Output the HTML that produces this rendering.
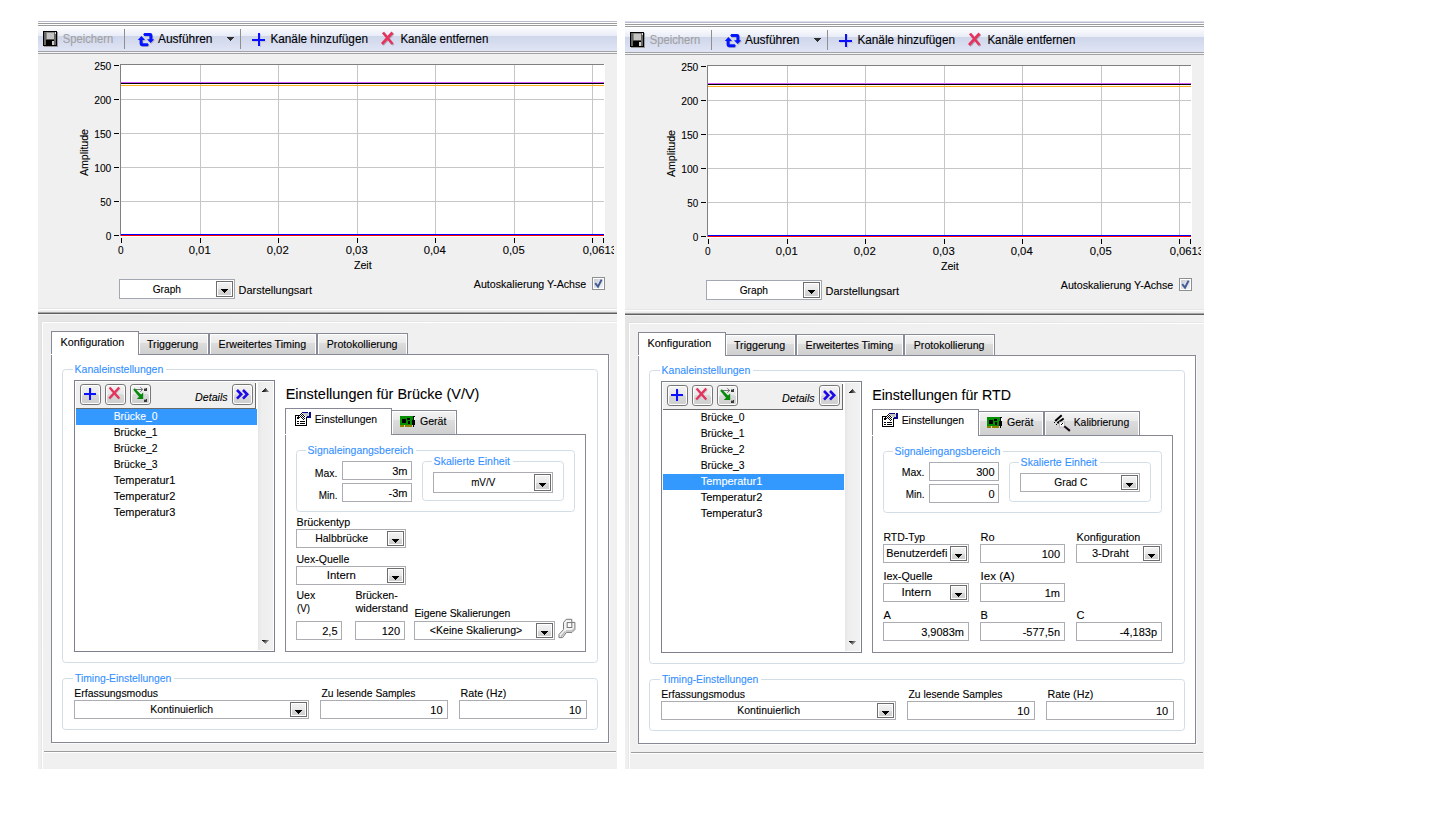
<!DOCTYPE html>
<html lang="de"><head><meta charset="utf-8"><title>DAQ-Assistent: Brücke und RTD</title>
<style>html,body{margin:0;padding:0;background:#fff;}body{width:1455px;height:833px;overflow:hidden;}svg{display:block;font-family:'Liberation Sans', 'DejaVu Sans', sans-serif;}text{white-space:pre;stroke-width:0.1px;}</style></head><body>
<svg width="1455" height="833" viewBox="0 0 1455 833" shape-rendering="crispEdges">
<defs><linearGradient id="gTb1" x1="0" y1="0" x2="0" y2="1"><stop offset="0" stop-color="#ffffff"/><stop offset="1" stop-color="#e8ecf7"/></linearGradient><linearGradient id="gTb2" x1="0" y1="0" x2="0" y2="1"><stop offset="0" stop-color="#cfd6ea"/><stop offset="1" stop-color="#e0e5f5"/></linearGradient><linearGradient id="gBtnTop" x1="0" y1="0" x2="0" y2="1"><stop offset="0" stop-color="#f2f2f2"/><stop offset="1" stop-color="#e8e8e8"/></linearGradient><linearGradient id="gBtnBot" x1="0" y1="0" x2="0" y2="1"><stop offset="0" stop-color="#dadada"/><stop offset="1" stop-color="#cfcfcf"/></linearGradient><linearGradient id="gTabTop" x1="0" y1="0" x2="0" y2="1"><stop offset="0" stop-color="#f3f3f3"/><stop offset="1" stop-color="#eaeaea"/></linearGradient><linearGradient id="gTabBot" x1="0" y1="0" x2="0" y2="1"><stop offset="0" stop-color="#dddddd"/><stop offset="1" stop-color="#cfcfcf"/></linearGradient><linearGradient id="gScroll" x1="0" y1="0" x2="1" y2="0"><stop offset="0" stop-color="#e6e6e6"/><stop offset="0.25" stop-color="#eeeeee"/><stop offset="1" stop-color="#f1f1f1"/></linearGradient><linearGradient id="gStrip" x1="0" y1="0" x2="0" y2="1"><stop offset="0" stop-color="#e5e5e5"/><stop offset="1" stop-color="#f0f0f0"/></linearGradient><linearGradient id="gStrip2" x1="0" y1="0" x2="0" y2="1"><stop offset="0" stop-color="#e1e1e1"/><stop offset="1" stop-color="#e8e8e8"/></linearGradient><linearGradient id="gBand" x1="0" y1="0" x2="1" y2="0"><stop offset="0" stop-color="#e5e5e5"/><stop offset="0.5" stop-color="#ededed"/><stop offset="1" stop-color="#f0f0f0"/></linearGradient><linearGradient id="gBand2" x1="0" y1="0" x2="1" y2="0"><stop offset="0" stop-color="#e0e0e0"/><stop offset="1" stop-color="#e8e8e8"/></linearGradient><linearGradient id="gChk" x1="0" y1="0" x2="1" y2="1"><stop offset="0" stop-color="#c9cdd6"/><stop offset="1" stop-color="#f4f4f6"/></linearGradient><linearGradient id="gArr" gradientUnits="userSpaceOnUse" x1="262" y1="0" x2="269" y2="0"><stop offset="0" stop-color="#0c0c0c"/><stop offset="0.45" stop-color="#3a3a3a"/><stop offset="1" stop-color="#b4b4b4"/></linearGradient><pattern id="pChk" width="2" height="2" patternUnits="userSpaceOnUse"><rect width="2" height="2" fill="#fff"/><rect width="1" height="1" fill="#000"/><rect x="1" y="1" width="1" height="1" fill="#000"/></pattern></defs>
<g id="panel-bruecke">
<rect x="38" y="21" width="579" height="748" fill="#f0f0f0"/>
<rect x="38" y="21" width="579" height="1" fill="#b7bbcd"/>
<rect x="38" y="22" width="579" height="1" fill="#fff"/>
<rect x="38" y="23" width="579" height="1" fill="#9b9b9b"/>
<rect x="38" y="24" width="579" height="1" fill="#fff"/>
<rect x="38" y="25" width="579" height="1" fill="#9b9b9b"/>
<rect x="38" y="26" width="579" height="10" fill="url(#gTb1)"/>
<rect x="38" y="36" width="579" height="15" fill="url(#gTb2)"/>
<rect x="38" y="51" width="579" height="1" fill="#a2a2a2"/>
<rect x="38" y="52" width="579" height="1" fill="#f3f4fa"/>
<rect x="38" y="53" width="579" height="1" fill="#a2a2a2"/>
<g id="toolbar" font-size="12">
<rect x="44" y="32" width="14" height="15" fill="#9a9a9a"/>
<rect x="43" y="31" width="14" height="15" fill="#000"/>
<rect x="44" y="32" width="2" height="13" fill="#666"/>
<rect x="54" y="32" width="2" height="13" fill="#666"/>
<rect x="46" y="32" width="8" height="7" fill="#c4c4c4"/>
<rect x="46" y="32" width="8" height="1" fill="#888"/>
<rect x="46" y="32" width="1" height="7" fill="#888"/>
<rect x="46" y="39" width="8" height="1" fill="#555"/>
<rect x="46" y="40" width="8" height="6" fill="#000"/>
<rect x="52" y="41" width="2" height="4" fill="#d0d0d0"/>
<rect x="55" y="32" width="1" height="2" fill="#ddd"/>
<text x="62.8" y="43" font-size="12" text-anchor="start" fill="#a1a1a1" stroke="#a1a1a1" textLength="50.5" lengthAdjust="spacingAndGlyphs">Speichern</text>
<rect x="124" y="29" width="1" height="20" fill="#8f8f8f"/>
<g shape-rendering="auto"><g transform="translate(0.8,0.8)" opacity="0.28"><path d="M143.2 34.5 L144.4 33 L150 33 Q152.4 33 152.4 35.4 L152.4 39.3 L154.2 39.3 L150.6 43.1 L147 39.3 L149.4 39.3 L149.4 36 L144.4 36 Z" fill="#5a4a20"/><path d="M143.2 34.5 L144.4 33 L150 33 Q152.4 33 152.4 35.4 L152.4 39.3 L154.2 39.3 L150.6 43.1 L147 39.3 L149.4 39.3 L149.4 36 L144.4 36 Z" fill="#5a4a20" transform="rotate(180 146 39.6)"/></g><path d="M143.2 34.5 L144.4 33 L150 33 Q152.4 33 152.4 35.4 L152.4 39.3 L154.2 39.3 L150.6 43.1 L147 39.3 L149.4 39.3 L149.4 36 L144.4 36 Z" fill="#0414ff"/><path d="M143.2 34.5 L144.4 33 L150 33 Q152.4 33 152.4 35.4 L152.4 39.3 L154.2 39.3 L150.6 43.1 L147 39.3 L149.4 39.3 L149.4 36 L144.4 36 Z" fill="#0414ff" transform="rotate(180 146 39.6)"/></g>
<text x="158" y="43" font-size="12" text-anchor="start" fill="#000" stroke="#000" textLength="54.5" lengthAdjust="spacingAndGlyphs">Ausführen</text>
<rect x="227" y="37" width="7" height="1" fill="#303030"/>
<rect x="228" y="38" width="5" height="1" fill="#303030"/>
<rect x="229" y="39" width="3" height="1" fill="#303030"/>
<rect x="230" y="40" width="1" height="1" fill="#303030"/>
<rect x="240" y="29" width="1" height="20" fill="#8f8f8f"/>
<rect x="253" y="41" width="13" height="1" fill="#bfc3d6"/>
<rect x="260" y="34" width="1" height="13" fill="#bfc3d6"/>
<rect x="252" y="39" width="13" height="2" fill="#0a10ff"/>
<rect x="258" y="33" width="2" height="13" fill="#0a10ff"/>
<text x="270.4" y="43" font-size="12" text-anchor="start" fill="#000" stroke="#000" textLength="97.6" lengthAdjust="spacingAndGlyphs">Kanäle hinzufügen</text>
<g shape-rendering="auto" stroke-linecap="butt" fill="none"><path d="M384 33.5 L393.5 45 M393.5 33.5 L383 45" stroke="#a9a9b8" stroke-width="2.2"/><path d="M383 32.5 L392.5 44 M392.5 32.5 L382 44" stroke="#e4335c" stroke-width="2.7"/></g>
<text x="400.4" y="43" font-size="12" text-anchor="start" fill="#000" stroke="#000" textLength="88.0" lengthAdjust="spacingAndGlyphs">Kanäle entfernen</text>
</g>
<g id="graph">
<rect x="120" y="64" width="485" height="173" fill="#fff"/>
<rect x="200" y="65" width="1" height="171" fill="#c6c6c6"/>
<rect x="278" y="65" width="1" height="171" fill="#c6c6c6"/>
<rect x="357" y="65" width="1" height="171" fill="#c6c6c6"/>
<rect x="435" y="65" width="1" height="171" fill="#c6c6c6"/>
<rect x="514" y="65" width="1" height="171" fill="#c6c6c6"/>
<rect x="592" y="65" width="1" height="171" fill="#c6c6c6"/>
<rect x="121" y="99" width="483" height="1" fill="#c6c6c6"/>
<rect x="121" y="133" width="483" height="1" fill="#c6c6c6"/>
<rect x="121" y="167" width="483" height="1" fill="#c6c6c6"/>
<rect x="121" y="201" width="483" height="1" fill="#c6c6c6"/>
<rect x="120" y="64" width="1" height="172" fill="#808080"/>
<rect x="120" y="64" width="484" height="1" fill="#808080"/>
<rect x="121" y="82" width="483" height="1" fill="#d65cff"/>
<rect x="121" y="83" width="483" height="1" fill="#000"/>
<rect x="121" y="85" width="483" height="1" fill="#ffb01e"/>
<rect x="121" y="234" width="483" height="1" fill="#0000ff"/>
<rect x="121" y="235" width="483" height="1" fill="#ff0000"/>
<rect x="114" y="65" width="5" height="1" fill="#000"/>
<text x="111.3" y="70" font-size="11" text-anchor="end" fill="#000" stroke="#000" textLength="17.1" lengthAdjust="spacingAndGlyphs">250</text>
<rect x="114" y="99" width="5" height="1" fill="#000"/>
<text x="111.3" y="104" font-size="11" text-anchor="end" fill="#000" stroke="#000" textLength="17.1" lengthAdjust="spacingAndGlyphs">200</text>
<rect x="114" y="133" width="5" height="1" fill="#000"/>
<text x="111.3" y="138" font-size="11" text-anchor="end" fill="#000" stroke="#000" textLength="17.1" lengthAdjust="spacingAndGlyphs">150</text>
<rect x="114" y="167" width="5" height="1" fill="#000"/>
<text x="111.3" y="172" font-size="11" text-anchor="end" fill="#000" stroke="#000" textLength="17.1" lengthAdjust="spacingAndGlyphs">100</text>
<rect x="114" y="201" width="5" height="1" fill="#000"/>
<text x="111.3" y="206" font-size="11" text-anchor="end" fill="#000" stroke="#000" textLength="11.0" lengthAdjust="spacingAndGlyphs">50</text>
<rect x="114" y="235" width="5" height="1" fill="#000"/>
<text x="111.3" y="240" font-size="11" text-anchor="end" fill="#000" stroke="#000" textLength="5.6" lengthAdjust="spacingAndGlyphs">0</text>
<rect x="121" y="238" width="1" height="5" fill="#000"/>
<text x="120.7" y="254.2" font-size="11" text-anchor="middle" fill="#000" stroke="#000" textLength="5.6" lengthAdjust="spacingAndGlyphs">0</text>
<rect x="200" y="238" width="1" height="5" fill="#000"/>
<text x="199.7" y="254.2" font-size="11" text-anchor="middle" fill="#000" stroke="#000" textLength="22.0" lengthAdjust="spacingAndGlyphs">0,01</text>
<rect x="278" y="238" width="1" height="5" fill="#000"/>
<text x="277.7" y="254.2" font-size="11" text-anchor="middle" fill="#000" stroke="#000" textLength="22.0" lengthAdjust="spacingAndGlyphs">0,02</text>
<rect x="357" y="238" width="1" height="5" fill="#000"/>
<text x="356.7" y="254.2" font-size="11" text-anchor="middle" fill="#000" stroke="#000" textLength="22.0" lengthAdjust="spacingAndGlyphs">0,03</text>
<rect x="435" y="238" width="1" height="5" fill="#000"/>
<text x="434.7" y="254.2" font-size="11" text-anchor="middle" fill="#000" stroke="#000" textLength="22.0" lengthAdjust="spacingAndGlyphs">0,04</text>
<rect x="514" y="238" width="1" height="5" fill="#000"/>
<text x="513.7" y="254.2" font-size="11" text-anchor="middle" fill="#000" stroke="#000" textLength="22.0" lengthAdjust="spacingAndGlyphs">0,05</text>
<rect x="592" y="238" width="1" height="5" fill="#000"/>
<rect x="603" y="238" width="1" height="5" fill="#000"/>
<clipPath id="clipx0"><rect x="570" y="244" width="44" height="14"/></clipPath>
<g clip-path="url(#clipx0)">
<text x="582.7" y="254.2" font-size="11" text-anchor="start" fill="#000" stroke="#000" textLength="34.3" lengthAdjust="spacingAndGlyphs">0,0613</text>
</g>
<text x="353.9" y="269" font-size="11" text-anchor="start" fill="#000" stroke="#000" textLength="17.8" lengthAdjust="spacingAndGlyphs">Zeit</text>
<text transform="translate(87.6,176) rotate(-90)" font-size="11" stroke="#000" textLength="47" lengthAdjust="spacingAndGlyphs">Amplitude</text>
<rect x="119.5" y="279.5" width="115" height="19" fill="#fff" stroke="#a3a7b1" stroke-width="1"/>
<rect x="216" y="281" width="17" height="16" fill="#6d6d6d"/>
<rect x="217" y="282" width="15" height="14" fill="#ffffff"/>
<rect x="218" y="283" width="13" height="6" fill="url(#gBtnTop)"/>
<rect x="218" y="289" width="13" height="6" fill="url(#gBtnBot)"/>
<rect x="221" y="289" width="7" height="1" fill="#000"/>
<rect x="222" y="290" width="5" height="1" fill="#000"/>
<rect x="223" y="291" width="3" height="1" fill="#000"/>
<rect x="224" y="292" width="1" height="1" fill="#000"/>
<text x="152.7" y="293" font-size="11" text-anchor="start" fill="#000" stroke="#000" textLength="28.3" lengthAdjust="spacingAndGlyphs">Graph</text>
<text x="238.6" y="294" font-size="11" text-anchor="start" fill="#000" stroke="#000" textLength="73.4" lengthAdjust="spacingAndGlyphs">Darstellungsart</text>
<text x="473.8" y="288" font-size="11" text-anchor="start" fill="#000" stroke="#000" textLength="112.5" lengthAdjust="spacingAndGlyphs">Autoskalierung Y-Achse</text>
<rect x="592.5" y="277.5" width="12" height="12" fill="#fff" stroke="#8e8f8f" stroke-width="1"/>
<rect x="594" y="279" width="9" height="9" fill="url(#gChk)"/>
<path d="M595.2 283.2 L598 286.6 L601.6 279.6" stroke="#435b96" stroke-width="2" fill="none" shape-rendering="auto"/>
</g>
<rect x="38" y="308" width="579" height="1" fill="#e6e6e6"/>
<rect x="38" y="309" width="579" height="1" fill="#fdfdfd"/>
<rect x="38" y="311" width="579" height="1" fill="#e9e9e9"/>
<rect x="38" y="312" width="579" height="1" fill="#a6a6a6"/>
<rect x="38" y="313" width="579" height="1" fill="#5e5e5e"/>
<rect x="38" y="314" width="579" height="1" fill="#f2f2f2"/>
<rect x="38" y="315" width="579" height="6" fill="url(#gBand)"/>
<rect x="38" y="321" width="579" height="1" fill="url(#gBand2)"/>
<rect x="38" y="321" width="3" height="448" fill="url(#gStrip)"/>
<rect x="41" y="321" width="1" height="448" fill="url(#gStrip2)"/>
<rect x="42" y="322" width="575" height="1" fill="#fff"/>
<rect x="42" y="322" width="1" height="447" fill="#fff"/>
<rect x="44" y="751" width="572" height="1" fill="#9c9c9c"/>
<rect x="44" y="752" width="572" height="1" fill="#fff"/>
<g id="tabs">
<rect x="51.5" y="354.5" width="557" height="388" fill="#fff" stroke="#868994" stroke-width="1"/>
<rect x="52" y="743" width="558" height="1" fill="#fafafa"/>
<rect x="609" y="355" width="1" height="389" fill="#fafafa"/>
<rect x="138" y="333" width="71" height="22" fill="#868b97"/>
<rect x="139" y="334" width="69" height="20" fill="#fff"/>
<rect x="140" y="335" width="67" height="8" fill="url(#gTabTop)"/>
<rect x="140" y="343" width="67" height="11" fill="url(#gTabBot)"/>
<rect x="209" y="333" width="108" height="22" fill="#868b97"/>
<rect x="210" y="334" width="106" height="20" fill="#fff"/>
<rect x="211" y="335" width="104" height="8" fill="url(#gTabTop)"/>
<rect x="211" y="343" width="104" height="11" fill="url(#gTabBot)"/>
<rect x="317" y="333" width="91" height="22" fill="#868b97"/>
<rect x="318" y="334" width="89" height="20" fill="#fff"/>
<rect x="319" y="335" width="87" height="8" fill="url(#gTabTop)"/>
<rect x="319" y="343" width="87" height="11" fill="url(#gTabBot)"/>
<rect x="51" y="331" width="88" height="24" fill="#868994"/>
<rect x="52" y="332" width="86" height="24" fill="#fff"/>
<rect x="51" y="354" width="1" height="1" fill="#fff"/>
<text x="60.6" y="346" font-size="11" text-anchor="start" fill="#000" stroke="#000" textLength="63.7" lengthAdjust="spacingAndGlyphs">Konfiguration</text>
<text x="147" y="348" font-size="11" text-anchor="start" fill="#000" stroke="#000" textLength="51.2" lengthAdjust="spacingAndGlyphs">Triggerung</text>
<text x="218.6" y="348" font-size="11" text-anchor="start" fill="#000" stroke="#000" textLength="87.6" lengthAdjust="spacingAndGlyphs">Erweitertes Timing</text>
<text x="326.8" y="348" font-size="11" text-anchor="start" fill="#000" stroke="#000" textLength="70.7" lengthAdjust="spacingAndGlyphs">Protokollierung</text>
</g>
<g id="channels">
<rect x="62.5" y="369.5" width="535" height="293" fill="none" stroke="#d3dde6" stroke-width="1" rx="3" shape-rendering="auto"/>
<rect x="72.6" y="368" width="93.70000000000002" height="3" fill="#fff"/>
<text x="74.6" y="373" font-size="11" text-anchor="start" fill="#3390ff" stroke="#3390ff" textLength="88.7" lengthAdjust="spacingAndGlyphs">Kanaleinstellungen</text>
<rect x="74.5" y="380.5" width="200" height="271" fill="#fff" stroke="#7b808c" stroke-width="1"/>
<rect x="76" y="382" width="179" height="26" fill="#f0f0f0"/>
<rect x="255" y="383" width="1" height="26" fill="#6b6b6b"/>
<rect x="76" y="408" width="180" height="1" fill="#6b6b6b"/>
<rect x="258" y="382" width="15" height="268" fill="url(#gScroll)"/>
<rect x="265" y="388" width="1" height="1" fill="url(#gArr)"/>
<rect x="264" y="389" width="3" height="1" fill="url(#gArr)"/>
<rect x="263" y="390" width="5" height="1" fill="url(#gArr)"/>
<rect x="262" y="391" width="7" height="1" fill="url(#gArr)"/>
<rect x="262" y="640" width="7" height="1" fill="url(#gArr)" opacity="1.0"/>
<rect x="263" y="641" width="5" height="1" fill="url(#gArr)" opacity="0.8200000000000001"/>
<rect x="264" y="642" width="3" height="1" fill="url(#gArr)" opacity="0.64"/>
<rect x="265" y="643" width="1" height="1" fill="url(#gArr)" opacity="0.45999999999999996"/>
<rect x="80.5" y="384.5" width="20" height="20" rx="2.6" fill="#fff" stroke="#767676" shape-rendering="auto"/>
<rect x="82" y="386" width="17" height="8" rx="1.5" fill="url(#gBtnTop)" shape-rendering="auto"/>
<rect x="82" y="394" width="17" height="9" rx="1.5" fill="url(#gBtnBot)" shape-rendering="auto"/>
<rect x="105.5" y="384.5" width="20" height="20" rx="2.6" fill="#fff" stroke="#767676" shape-rendering="auto"/>
<rect x="107" y="386" width="17" height="8" rx="1.5" fill="url(#gBtnTop)" shape-rendering="auto"/>
<rect x="107" y="394" width="17" height="9" rx="1.5" fill="url(#gBtnBot)" shape-rendering="auto"/>
<rect x="130.5" y="384.5" width="20" height="20" rx="2.6" fill="#fff" stroke="#767676" shape-rendering="auto"/>
<rect x="132" y="386" width="17" height="8" rx="1.5" fill="url(#gBtnTop)" shape-rendering="auto"/>
<rect x="132" y="394" width="17" height="9" rx="1.5" fill="url(#gBtnBot)" shape-rendering="auto"/>
<rect x="232.5" y="384.5" width="20" height="20" rx="2.6" fill="#fff" stroke="#767676" shape-rendering="auto"/>
<rect x="234" y="386" width="17" height="8" rx="1.5" fill="url(#gBtnTop)" shape-rendering="auto"/>
<rect x="234" y="394" width="17" height="9" rx="1.5" fill="url(#gBtnBot)" shape-rendering="auto"/>
<rect x="85" y="395" width="12" height="1" fill="#d2d2d6"/>
<rect x="91" y="389" width="1" height="12" fill="#d2d2d6"/>
<rect x="84" y="393" width="12" height="2" fill="#0a10ff"/>
<rect x="89" y="388" width="2" height="12" fill="#0a10ff"/>
<g shape-rendering="auto" fill="none"><path d="M110.4 388.3 L120 399.3 M120 388.3 L110 399.3" stroke="#c4c4c4" stroke-width="2"/><path d="M109.6 387.5 L119.2 398.6 M119.2 387.5 L109.2 398.6" stroke="#e4335c" stroke-width="2.3"/></g>
<g shape-rendering="auto"><path d="M135.5 389.5 L142.6 389.5 M140.3 387.3 L142.7 389.5 L140.3 391.7" stroke="#666" stroke-width="0.9" fill="none"/><path d="M133.2 389.8 L134.8 388.2 L141 394.6 L143.2 392.6 L143.2 399 L136.8 399 L139 396.8 Z" fill="#078a0c"/></g>
<rect x="144" y="388" width="3" height="3" fill="#3a3a3a"/>
<rect x="144" y="399" width="3" height="3" fill="#3a3a3a"/>
<rect x="144" y="388" width="2" height="1" fill="#9a9a9a"/>
<rect x="144" y="399" width="2" height="1" fill="#9a9a9a"/>
<path d="M237 390 L241.2 394.3 L237 398.6 M243 390 L247.2 394.3 L243 398.6" stroke="#1c08e8" stroke-width="2.6" fill="none" shape-rendering="auto"/>
<text x="195" y="401" font-size="11" font-style="italic" stroke="#000" textLength="32.7" lengthAdjust="spacingAndGlyphs">Details</text>
<rect x="76" y="409" width="181" height="16" fill="#3399ff"/>
<text x="113.7" y="420" font-size="11" text-anchor="start" fill="#fff" stroke="#fff" textLength="43.8" lengthAdjust="spacingAndGlyphs">Brücke_0</text>
<text x="113.7" y="436" font-size="11" text-anchor="start" fill="#000" stroke="#000" textLength="43.8" lengthAdjust="spacingAndGlyphs">Brücke_1</text>
<text x="113.7" y="452" font-size="11" text-anchor="start" fill="#000" stroke="#000" textLength="43.8" lengthAdjust="spacingAndGlyphs">Brücke_2</text>
<text x="113.7" y="468" font-size="11" text-anchor="start" fill="#000" stroke="#000" textLength="43.8" lengthAdjust="spacingAndGlyphs">Brücke_3</text>
<text x="113.7" y="484" font-size="11" text-anchor="start" fill="#000" stroke="#000" textLength="61.6" lengthAdjust="spacingAndGlyphs">Temperatur1</text>
<text x="113.7" y="500" font-size="11" text-anchor="start" fill="#000" stroke="#000" textLength="61.6" lengthAdjust="spacingAndGlyphs">Temperatur2</text>
<text x="113.7" y="516" font-size="11" text-anchor="start" fill="#000" stroke="#000" textLength="61.6" lengthAdjust="spacingAndGlyphs">Temperatur3</text>
</g>
<g id="detail">
<text x="285.7" y="399" font-size="15" text-anchor="start" fill="#000" stroke="#000" textLength="193.7" lengthAdjust="spacingAndGlyphs">Einstellungen für Brücke (V/V)</text>
<rect x="285.5" y="434.5" width="300" height="217" fill="#fff" stroke="#868994" stroke-width="1"/>
<rect x="391" y="410" width="66" height="25" fill="#868b97"/>
<rect x="392" y="411" width="64" height="23" fill="#fff"/>
<rect x="393" y="412" width="62" height="8" fill="url(#gTabTop)"/>
<rect x="393" y="420" width="62" height="14" fill="url(#gTabBot)"/>
<rect x="285" y="408" width="107" height="27" fill="#868994"/>
<rect x="286" y="409" width="105" height="27" fill="#fff"/>
<rect x="285" y="434" width="1" height="1" fill="#fff"/>
<rect x="295" y="415" width="12" height="11" fill="#000"/>
<rect x="296" y="416" width="10" height="9" fill="#fff"/>
<rect x="297" y="421" width="2" height="1" fill="#000"/>
<rect x="300" y="421" width="5" height="1" fill="#000"/>
<rect x="297" y="423" width="2" height="1" fill="#000"/>
<rect x="300" y="423" width="5" height="1" fill="#000"/>
<rect x="302" y="412" width="6" height="1" fill="#0a0a8a"/>
<rect x="307" y="416" width="2" height="2" fill="#0a0a8a"/>
<rect x="309" y="412" width="2" height="6" fill="#0a0a8a"/>
<polygon points="301.5,412 306,416.5 303.5,420.5 301,418 299,418.5 297,417.5" fill="url(#pChk)"/>
<rect x="303" y="413" width="6" height="2" fill="#c2c2c2"/>
<rect x="305" y="415" width="4" height="1" fill="#c2c2c2"/>
<rect x="306" y="416" width="1" height="1" fill="#c2c2c2"/>
<rect x="308" y="414" width="1" height="2" fill="#d8d8c8"/>
<rect x="297" y="417" width="2" height="2" fill="#000"/>
<text x="314.7" y="423" font-size="11" text-anchor="start" fill="#000" stroke="#000" textLength="62.4" lengthAdjust="spacingAndGlyphs">Einstellungen</text>
<rect x="400" y="416" width="13" height="9" fill="#028f02"/>
<rect x="400" y="425" width="4" height="2" fill="#8c8400"/>
<rect x="405" y="425" width="7" height="2" fill="#8c8400"/>
<rect x="402" y="419" width="4" height="4" fill="#000"/>
<rect x="407" y="418" width="3" height="2" fill="#000"/>
<rect x="408" y="421" width="2" height="3" fill="#000"/>
<rect x="413" y="416" width="2" height="1" fill="#000"/>
<rect x="413" y="416" width="1" height="11" fill="#000"/>
<rect x="412" y="420" width="3" height="5" fill="#000"/>
<rect x="414" y="417" width="1" height="3" fill="#fafafa"/>
<text x="419.9" y="425" font-size="11" text-anchor="start" fill="#000" stroke="#000" textLength="26.6" lengthAdjust="spacingAndGlyphs">Gerät</text>
<rect x="296.5" y="450.5" width="278" height="61" fill="none" stroke="#d3dde6" stroke-width="1" rx="3" shape-rendering="auto"/>
<rect x="305.6" y="449" width="110.79999999999995" height="3" fill="#fff"/>
<text x="307.6" y="454" font-size="11" text-anchor="start" fill="#3390ff" stroke="#3390ff" textLength="105.8" lengthAdjust="spacingAndGlyphs">Signaleingangsbereich</text>
<text x="314.7" y="477" font-size="11" text-anchor="start" fill="#000" stroke="#000" textLength="22.7" lengthAdjust="spacingAndGlyphs">Max.</text>
<text x="318.7" y="499" font-size="11" text-anchor="start" fill="#000" stroke="#000" textLength="18.7" lengthAdjust="spacingAndGlyphs">Min.</text>
<rect x="342.5" y="461.5" width="69" height="18" fill="#fff" stroke="#abadb3" stroke-width="1"/>
<text x="407.5" y="475" font-size="11" text-anchor="end" fill="#000" stroke="#000">3m</text>
<rect x="342.5" y="483.5" width="69" height="18" fill="#fff" stroke="#abadb3" stroke-width="1"/>
<text x="407.5" y="497" font-size="11" text-anchor="end" fill="#000" stroke="#000">-3m</text>
<rect x="422.5" y="461.5" width="141" height="39" fill="none" stroke="#d3dde6" stroke-width="1" rx="3" shape-rendering="auto"/>
<rect x="431.6" y="460" width="81.39999999999998" height="3" fill="#fff"/>
<text x="433.6" y="465" font-size="11" text-anchor="start" fill="#3390ff" stroke="#3390ff" textLength="76.4" lengthAdjust="spacingAndGlyphs">Skalierte Einheit</text>
<rect x="433.5" y="472.5" width="119" height="20" fill="#fff" stroke="#abadb3" stroke-width="1"/>
<rect x="534" y="474" width="17" height="17" fill="#6d6d6d"/>
<rect x="535" y="475" width="15" height="15" fill="#ffffff"/>
<rect x="536" y="476" width="13" height="7" fill="url(#gBtnTop)"/>
<rect x="536" y="483" width="13" height="6" fill="url(#gBtnBot)"/>
<rect x="539" y="483" width="7" height="1" fill="#000"/>
<rect x="540" y="484" width="5" height="1" fill="#000"/>
<rect x="541" y="485" width="3" height="1" fill="#000"/>
<rect x="542" y="486" width="1" height="1" fill="#000"/>
<text x="471.2" y="486" font-size="11" text-anchor="start" fill="#000" stroke="#000" textLength="24.0" lengthAdjust="spacingAndGlyphs">mV/V</text>
<text x="296.5" y="526" font-size="11" text-anchor="start" fill="#000" stroke="#000" textLength="53.7" lengthAdjust="spacingAndGlyphs">Brückentyp</text>
<rect x="296.5" y="529.5" width="109" height="18" fill="#fff" stroke="#abadb3" stroke-width="1"/>
<rect x="387" y="531" width="17" height="15" fill="#6d6d6d"/>
<rect x="388" y="532" width="15" height="13" fill="#ffffff"/>
<rect x="389" y="533" width="13" height="6" fill="url(#gBtnTop)"/>
<rect x="389" y="539" width="13" height="5" fill="url(#gBtnBot)"/>
<rect x="392" y="539" width="7" height="1" fill="#000"/>
<rect x="393" y="540" width="5" height="1" fill="#000"/>
<rect x="394" y="541" width="3" height="1" fill="#000"/>
<rect x="395" y="542" width="1" height="1" fill="#000"/>
<text x="315.2" y="542" font-size="11" text-anchor="start" fill="#000" stroke="#000" textLength="53.0" lengthAdjust="spacingAndGlyphs">Halbbrücke</text>
<text x="296.5" y="563" font-size="11" text-anchor="start" fill="#000" stroke="#000" textLength="52.8" lengthAdjust="spacingAndGlyphs">Uex-Quelle</text>
<rect x="296.5" y="566.5" width="109" height="18" fill="#fff" stroke="#abadb3" stroke-width="1"/>
<rect x="387" y="568" width="17" height="15" fill="#6d6d6d"/>
<rect x="388" y="569" width="15" height="13" fill="#ffffff"/>
<rect x="389" y="570" width="13" height="6" fill="url(#gBtnTop)"/>
<rect x="389" y="576" width="13" height="5" fill="url(#gBtnBot)"/>
<rect x="392" y="576" width="7" height="1" fill="#000"/>
<rect x="393" y="577" width="5" height="1" fill="#000"/>
<rect x="394" y="578" width="3" height="1" fill="#000"/>
<rect x="395" y="579" width="1" height="1" fill="#000"/>
<text x="326.8" y="579" font-size="11" text-anchor="start" fill="#000" stroke="#000" textLength="29.1" lengthAdjust="spacingAndGlyphs">Intern</text>
<text x="296.5" y="599" font-size="11" text-anchor="start" fill="#000" stroke="#000" textLength="18.7" lengthAdjust="spacingAndGlyphs">Uex</text>
<text x="297" y="612" font-size="11" text-anchor="start" fill="#000" stroke="#000" textLength="13.0" lengthAdjust="spacingAndGlyphs">(V)</text>
<text x="355.4" y="599" font-size="11" text-anchor="start" fill="#000" stroke="#000" textLength="42.3" lengthAdjust="spacingAndGlyphs">Brücken-</text>
<text x="355.4" y="612" font-size="11" text-anchor="start" fill="#000" stroke="#000" textLength="52.8" lengthAdjust="spacingAndGlyphs">widerstand</text>
<rect x="296.5" y="621.5" width="45" height="18" fill="#fff" stroke="#abadb3" stroke-width="1"/>
<text x="337.5" y="635" font-size="11" text-anchor="end" fill="#000" stroke="#000">2,5</text>
<rect x="355.5" y="621.5" width="49" height="18" fill="#fff" stroke="#abadb3" stroke-width="1"/>
<text x="400" y="635" font-size="11" text-anchor="end" fill="#000" stroke="#000">120</text>
<text x="414.4" y="617" font-size="11" text-anchor="start" fill="#000" stroke="#000" textLength="96.0" lengthAdjust="spacingAndGlyphs">Eigene Skalierungen</text>
<rect x="414.5" y="621.5" width="140" height="18" fill="#fff" stroke="#abadb3" stroke-width="1"/>
<rect x="536" y="623" width="17" height="15" fill="#6d6d6d"/>
<rect x="537" y="624" width="15" height="13" fill="#ffffff"/>
<rect x="538" y="625" width="13" height="6" fill="url(#gBtnTop)"/>
<rect x="538" y="631" width="13" height="5" fill="url(#gBtnBot)"/>
<rect x="541" y="631" width="7" height="1" fill="#000"/>
<rect x="542" y="632" width="5" height="1" fill="#000"/>
<rect x="543" y="633" width="3" height="1" fill="#000"/>
<rect x="544" y="634" width="1" height="1" fill="#000"/>
<text x="429.8" y="634" font-size="11" text-anchor="start" fill="#000" stroke="#000" textLength="92.4" lengthAdjust="spacingAndGlyphs">&lt;Keine Skalierung&gt;</text>
<g shape-rendering="auto" stroke-linejoin="miter"><path d="M563.5 622.5 L566.2 619.3 L571.8 619.3 L571.8 622.4 L574.9 622.4 L574.9 629.5 L572 632.4 L566.4 632.4 L562.6 637.6 L559 637.6 L559 634.4 L563.5 629.6 Z" fill="#f3f3f3" stroke="#787878" stroke-width="1"/><path d="M566 631 L572 631 L574 629 M561 636.6 L565.5 631.5" stroke="#bdbdbd" stroke-width="1.6" fill="none"/><rect x="567.2" y="622.6" width="4.6" height="4.9" fill="#fdfdfd" stroke="#787878" stroke-width="1"/></g>
</g>
<g id="timing">
<rect x="62.5" y="678.5" width="535" height="51" fill="none" stroke="#d3dde6" stroke-width="1" rx="3" shape-rendering="auto"/>
<rect x="73" y="677" width="101.19999999999999" height="3" fill="#fff"/>
<text x="75" y="682" font-size="11" text-anchor="start" fill="#3390ff" stroke="#3390ff" textLength="96.2" lengthAdjust="spacingAndGlyphs">Timing-Einstellungen</text>
<text x="74.3" y="697" font-size="11" text-anchor="start" fill="#000" stroke="#000" textLength="83.7" lengthAdjust="spacingAndGlyphs">Erfassungsmodus</text>
<rect x="74.5" y="700.5" width="234" height="18" fill="#fff" stroke="#abadb3" stroke-width="1"/>
<rect x="290" y="702" width="17" height="15" fill="#6d6d6d"/>
<rect x="291" y="703" width="15" height="13" fill="#ffffff"/>
<rect x="292" y="704" width="13" height="6" fill="url(#gBtnTop)"/>
<rect x="292" y="710" width="13" height="5" fill="url(#gBtnBot)"/>
<rect x="295" y="710" width="7" height="1" fill="#000"/>
<rect x="296" y="711" width="5" height="1" fill="#000"/>
<rect x="297" y="712" width="3" height="1" fill="#000"/>
<rect x="298" y="713" width="1" height="1" fill="#000"/>
<text x="150.3" y="713" font-size="11" text-anchor="start" fill="#000" stroke="#000" textLength="62.9" lengthAdjust="spacingAndGlyphs">Kontinuierlich</text>
<text x="321.5" y="697" font-size="11" text-anchor="start" fill="#000" stroke="#000" textLength="94.0" lengthAdjust="spacingAndGlyphs">Zu lesende Samples</text>
<rect x="320.5" y="700.5" width="127" height="18" fill="#fff" stroke="#abadb3" stroke-width="1"/>
<text x="442.6" y="714" font-size="11" text-anchor="end" fill="#000" stroke="#000">10</text>
<text x="460.5" y="697" font-size="11" text-anchor="start" fill="#000" stroke="#000" textLength="45.8" lengthAdjust="spacingAndGlyphs">Rate (Hz)</text>
<rect x="459.5" y="700.5" width="127" height="18" fill="#fff" stroke="#abadb3" stroke-width="1"/>
<text x="581.2" y="714" font-size="11" text-anchor="end" fill="#000" stroke="#000">10</text>
</g>
</g>
<clipPath id="clipR"><rect x="625" y="21" width="579" height="748"/></clipPath>
<g clip-path="url(#clipR)"><g id="panel-rtd" transform="translate(587,1)">
<rect x="38" y="21" width="579" height="748" fill="#f0f0f0"/>
<rect x="38" y="20" width="579" height="1" fill="#dadde9"/>
<rect x="38" y="21" width="579" height="1" fill="#b7bbcd"/>
<rect x="38" y="22" width="579" height="1" fill="#fff"/>
<rect x="38" y="23" width="579" height="1" fill="#9b9b9b"/>
<rect x="38" y="24" width="579" height="1" fill="#fff"/>
<rect x="38" y="25" width="579" height="1" fill="#9b9b9b"/>
<rect x="38" y="26" width="579" height="10" fill="url(#gTb1)"/>
<rect x="38" y="36" width="579" height="15" fill="url(#gTb2)"/>
<rect x="38" y="51" width="579" height="1" fill="#a2a2a2"/>
<rect x="38" y="52" width="579" height="1" fill="#f3f4fa"/>
<rect x="38" y="53" width="579" height="1" fill="#a2a2a2"/>
<g id="toolbar" font-size="12">
<rect x="44" y="32" width="14" height="15" fill="#9a9a9a"/>
<rect x="43" y="31" width="14" height="15" fill="#000"/>
<rect x="44" y="32" width="2" height="13" fill="#666"/>
<rect x="54" y="32" width="2" height="13" fill="#666"/>
<rect x="46" y="32" width="8" height="7" fill="#c4c4c4"/>
<rect x="46" y="32" width="8" height="1" fill="#888"/>
<rect x="46" y="32" width="1" height="7" fill="#888"/>
<rect x="46" y="39" width="8" height="1" fill="#555"/>
<rect x="46" y="40" width="8" height="6" fill="#000"/>
<rect x="52" y="41" width="2" height="4" fill="#d0d0d0"/>
<rect x="55" y="32" width="1" height="2" fill="#ddd"/>
<text x="62.8" y="43" font-size="12" text-anchor="start" fill="#a1a1a1" stroke="#a1a1a1" textLength="50.5" lengthAdjust="spacingAndGlyphs">Speichern</text>
<rect x="124" y="29" width="1" height="20" fill="#8f8f8f"/>
<g shape-rendering="auto"><g transform="translate(0.8,0.8)" opacity="0.28"><path d="M143.2 34.5 L144.4 33 L150 33 Q152.4 33 152.4 35.4 L152.4 39.3 L154.2 39.3 L150.6 43.1 L147 39.3 L149.4 39.3 L149.4 36 L144.4 36 Z" fill="#5a4a20"/><path d="M143.2 34.5 L144.4 33 L150 33 Q152.4 33 152.4 35.4 L152.4 39.3 L154.2 39.3 L150.6 43.1 L147 39.3 L149.4 39.3 L149.4 36 L144.4 36 Z" fill="#5a4a20" transform="rotate(180 146 39.6)"/></g><path d="M143.2 34.5 L144.4 33 L150 33 Q152.4 33 152.4 35.4 L152.4 39.3 L154.2 39.3 L150.6 43.1 L147 39.3 L149.4 39.3 L149.4 36 L144.4 36 Z" fill="#0414ff"/><path d="M143.2 34.5 L144.4 33 L150 33 Q152.4 33 152.4 35.4 L152.4 39.3 L154.2 39.3 L150.6 43.1 L147 39.3 L149.4 39.3 L149.4 36 L144.4 36 Z" fill="#0414ff" transform="rotate(180 146 39.6)"/></g>
<text x="158" y="43" font-size="12" text-anchor="start" fill="#000" stroke="#000" textLength="54.5" lengthAdjust="spacingAndGlyphs">Ausführen</text>
<rect x="227" y="37" width="7" height="1" fill="#303030"/>
<rect x="228" y="38" width="5" height="1" fill="#303030"/>
<rect x="229" y="39" width="3" height="1" fill="#303030"/>
<rect x="230" y="40" width="1" height="1" fill="#303030"/>
<rect x="240" y="29" width="1" height="20" fill="#8f8f8f"/>
<rect x="253" y="41" width="13" height="1" fill="#bfc3d6"/>
<rect x="260" y="34" width="1" height="13" fill="#bfc3d6"/>
<rect x="252" y="39" width="13" height="2" fill="#0a10ff"/>
<rect x="258" y="33" width="2" height="13" fill="#0a10ff"/>
<text x="270.4" y="43" font-size="12" text-anchor="start" fill="#000" stroke="#000" textLength="97.6" lengthAdjust="spacingAndGlyphs">Kanäle hinzufügen</text>
<g shape-rendering="auto" stroke-linecap="butt" fill="none"><path d="M384 33.5 L393.5 45 M393.5 33.5 L383 45" stroke="#a9a9b8" stroke-width="2.2"/><path d="M383 32.5 L392.5 44 M392.5 32.5 L382 44" stroke="#e4335c" stroke-width="2.7"/></g>
<text x="400.4" y="43" font-size="12" text-anchor="start" fill="#000" stroke="#000" textLength="88.0" lengthAdjust="spacingAndGlyphs">Kanäle entfernen</text>
</g>
<g id="graph">
<rect x="120" y="64" width="485" height="173" fill="#fff"/>
<rect x="200" y="65" width="1" height="171" fill="#c6c6c6"/>
<rect x="278" y="65" width="1" height="171" fill="#c6c6c6"/>
<rect x="357" y="65" width="1" height="171" fill="#c6c6c6"/>
<rect x="435" y="65" width="1" height="171" fill="#c6c6c6"/>
<rect x="514" y="65" width="1" height="171" fill="#c6c6c6"/>
<rect x="592" y="65" width="1" height="171" fill="#c6c6c6"/>
<rect x="121" y="99" width="483" height="1" fill="#c6c6c6"/>
<rect x="121" y="133" width="483" height="1" fill="#c6c6c6"/>
<rect x="121" y="167" width="483" height="1" fill="#c6c6c6"/>
<rect x="121" y="201" width="483" height="1" fill="#c6c6c6"/>
<rect x="120" y="64" width="1" height="172" fill="#808080"/>
<rect x="120" y="64" width="484" height="1" fill="#808080"/>
<rect x="121" y="82" width="483" height="1" fill="#d65cff"/>
<rect x="121" y="83" width="483" height="1" fill="#000"/>
<rect x="121" y="85" width="483" height="1" fill="#ffb01e"/>
<rect x="121" y="234" width="483" height="1" fill="#0000ff"/>
<rect x="121" y="235" width="483" height="1" fill="#ff0000"/>
<rect x="114" y="65" width="5" height="1" fill="#000"/>
<text x="111.3" y="70" font-size="11" text-anchor="end" fill="#000" stroke="#000" textLength="17.1" lengthAdjust="spacingAndGlyphs">250</text>
<rect x="114" y="99" width="5" height="1" fill="#000"/>
<text x="111.3" y="104" font-size="11" text-anchor="end" fill="#000" stroke="#000" textLength="17.1" lengthAdjust="spacingAndGlyphs">200</text>
<rect x="114" y="133" width="5" height="1" fill="#000"/>
<text x="111.3" y="138" font-size="11" text-anchor="end" fill="#000" stroke="#000" textLength="17.1" lengthAdjust="spacingAndGlyphs">150</text>
<rect x="114" y="167" width="5" height="1" fill="#000"/>
<text x="111.3" y="172" font-size="11" text-anchor="end" fill="#000" stroke="#000" textLength="17.1" lengthAdjust="spacingAndGlyphs">100</text>
<rect x="114" y="201" width="5" height="1" fill="#000"/>
<text x="111.3" y="206" font-size="11" text-anchor="end" fill="#000" stroke="#000" textLength="11.0" lengthAdjust="spacingAndGlyphs">50</text>
<rect x="114" y="235" width="5" height="1" fill="#000"/>
<text x="111.3" y="240" font-size="11" text-anchor="end" fill="#000" stroke="#000" textLength="5.6" lengthAdjust="spacingAndGlyphs">0</text>
<rect x="121" y="238" width="1" height="5" fill="#000"/>
<text x="120.7" y="254.2" font-size="11" text-anchor="middle" fill="#000" stroke="#000" textLength="5.6" lengthAdjust="spacingAndGlyphs">0</text>
<rect x="200" y="238" width="1" height="5" fill="#000"/>
<text x="199.7" y="254.2" font-size="11" text-anchor="middle" fill="#000" stroke="#000" textLength="22.0" lengthAdjust="spacingAndGlyphs">0,01</text>
<rect x="278" y="238" width="1" height="5" fill="#000"/>
<text x="277.7" y="254.2" font-size="11" text-anchor="middle" fill="#000" stroke="#000" textLength="22.0" lengthAdjust="spacingAndGlyphs">0,02</text>
<rect x="357" y="238" width="1" height="5" fill="#000"/>
<text x="356.7" y="254.2" font-size="11" text-anchor="middle" fill="#000" stroke="#000" textLength="22.0" lengthAdjust="spacingAndGlyphs">0,03</text>
<rect x="435" y="238" width="1" height="5" fill="#000"/>
<text x="434.7" y="254.2" font-size="11" text-anchor="middle" fill="#000" stroke="#000" textLength="22.0" lengthAdjust="spacingAndGlyphs">0,04</text>
<rect x="514" y="238" width="1" height="5" fill="#000"/>
<text x="513.7" y="254.2" font-size="11" text-anchor="middle" fill="#000" stroke="#000" textLength="22.0" lengthAdjust="spacingAndGlyphs">0,05</text>
<rect x="592" y="238" width="1" height="5" fill="#000"/>
<rect x="603" y="238" width="1" height="5" fill="#000"/>
<clipPath id="clipx1"><rect x="570" y="244" width="44" height="14"/></clipPath>
<g clip-path="url(#clipx1)">
<text x="582.7" y="254.2" font-size="11" text-anchor="start" fill="#000" stroke="#000" textLength="34.3" lengthAdjust="spacingAndGlyphs">0,0613</text>
</g>
<text x="353.9" y="269" font-size="11" text-anchor="start" fill="#000" stroke="#000" textLength="17.8" lengthAdjust="spacingAndGlyphs">Zeit</text>
<text transform="translate(87.6,176) rotate(-90)" font-size="11" stroke="#000" textLength="47" lengthAdjust="spacingAndGlyphs">Amplitude</text>
<rect x="119.5" y="279.5" width="115" height="19" fill="#fff" stroke="#a3a7b1" stroke-width="1"/>
<rect x="216" y="281" width="17" height="16" fill="#6d6d6d"/>
<rect x="217" y="282" width="15" height="14" fill="#ffffff"/>
<rect x="218" y="283" width="13" height="6" fill="url(#gBtnTop)"/>
<rect x="218" y="289" width="13" height="6" fill="url(#gBtnBot)"/>
<rect x="221" y="289" width="7" height="1" fill="#000"/>
<rect x="222" y="290" width="5" height="1" fill="#000"/>
<rect x="223" y="291" width="3" height="1" fill="#000"/>
<rect x="224" y="292" width="1" height="1" fill="#000"/>
<text x="152.7" y="293" font-size="11" text-anchor="start" fill="#000" stroke="#000" textLength="28.3" lengthAdjust="spacingAndGlyphs">Graph</text>
<text x="238.6" y="294" font-size="11" text-anchor="start" fill="#000" stroke="#000" textLength="73.4" lengthAdjust="spacingAndGlyphs">Darstellungsart</text>
<text x="473.8" y="288" font-size="11" text-anchor="start" fill="#000" stroke="#000" textLength="112.5" lengthAdjust="spacingAndGlyphs">Autoskalierung Y-Achse</text>
<rect x="592.5" y="277.5" width="12" height="12" fill="#fff" stroke="#8e8f8f" stroke-width="1"/>
<rect x="594" y="279" width="9" height="9" fill="url(#gChk)"/>
<path d="M595.2 283.2 L598 286.6 L601.6 279.6" stroke="#435b96" stroke-width="2" fill="none" shape-rendering="auto"/>
</g>
<rect x="38" y="308" width="579" height="1" fill="#e6e6e6"/>
<rect x="38" y="309" width="579" height="1" fill="#fdfdfd"/>
<rect x="38" y="311" width="579" height="1" fill="#e9e9e9"/>
<rect x="38" y="312" width="579" height="1" fill="#a6a6a6"/>
<rect x="38" y="313" width="579" height="1" fill="#5e5e5e"/>
<rect x="38" y="314" width="579" height="1" fill="#f2f2f2"/>
<rect x="38" y="315" width="579" height="6" fill="url(#gBand)"/>
<rect x="38" y="321" width="579" height="1" fill="url(#gBand2)"/>
<rect x="38" y="321" width="3" height="448" fill="url(#gStrip)"/>
<rect x="41" y="321" width="1" height="448" fill="url(#gStrip2)"/>
<rect x="42" y="322" width="575" height="1" fill="#fff"/>
<rect x="42" y="322" width="1" height="447" fill="#fff"/>
<rect x="44" y="751" width="572" height="1" fill="#9c9c9c"/>
<rect x="44" y="752" width="572" height="1" fill="#fff"/>
<g id="tabs">
<rect x="51.5" y="354.5" width="557" height="388" fill="#fff" stroke="#868994" stroke-width="1"/>
<rect x="52" y="743" width="558" height="1" fill="#fafafa"/>
<rect x="609" y="355" width="1" height="389" fill="#fafafa"/>
<rect x="138" y="333" width="71" height="22" fill="#868b97"/>
<rect x="139" y="334" width="69" height="20" fill="#fff"/>
<rect x="140" y="335" width="67" height="8" fill="url(#gTabTop)"/>
<rect x="140" y="343" width="67" height="11" fill="url(#gTabBot)"/>
<rect x="209" y="333" width="108" height="22" fill="#868b97"/>
<rect x="210" y="334" width="106" height="20" fill="#fff"/>
<rect x="211" y="335" width="104" height="8" fill="url(#gTabTop)"/>
<rect x="211" y="343" width="104" height="11" fill="url(#gTabBot)"/>
<rect x="317" y="333" width="91" height="22" fill="#868b97"/>
<rect x="318" y="334" width="89" height="20" fill="#fff"/>
<rect x="319" y="335" width="87" height="8" fill="url(#gTabTop)"/>
<rect x="319" y="343" width="87" height="11" fill="url(#gTabBot)"/>
<rect x="51" y="331" width="88" height="24" fill="#868994"/>
<rect x="52" y="332" width="86" height="24" fill="#fff"/>
<rect x="51" y="354" width="1" height="1" fill="#fff"/>
<text x="60.6" y="346" font-size="11" text-anchor="start" fill="#000" stroke="#000" textLength="63.7" lengthAdjust="spacingAndGlyphs">Konfiguration</text>
<text x="147" y="348" font-size="11" text-anchor="start" fill="#000" stroke="#000" textLength="51.2" lengthAdjust="spacingAndGlyphs">Triggerung</text>
<text x="218.6" y="348" font-size="11" text-anchor="start" fill="#000" stroke="#000" textLength="87.6" lengthAdjust="spacingAndGlyphs">Erweitertes Timing</text>
<text x="326.8" y="348" font-size="11" text-anchor="start" fill="#000" stroke="#000" textLength="70.7" lengthAdjust="spacingAndGlyphs">Protokollierung</text>
</g>
<g id="channels">
<rect x="62.5" y="369.5" width="535" height="293" fill="none" stroke="#d3dde6" stroke-width="1" rx="3" shape-rendering="auto"/>
<rect x="72.6" y="368" width="93.70000000000002" height="3" fill="#fff"/>
<text x="74.6" y="373" font-size="11" text-anchor="start" fill="#3390ff" stroke="#3390ff" textLength="88.7" lengthAdjust="spacingAndGlyphs">Kanaleinstellungen</text>
<rect x="74.5" y="380.5" width="200" height="271" fill="#fff" stroke="#7b808c" stroke-width="1"/>
<rect x="76" y="382" width="179" height="26" fill="#f0f0f0"/>
<rect x="255" y="383" width="1" height="26" fill="#6b6b6b"/>
<rect x="76" y="408" width="180" height="1" fill="#6b6b6b"/>
<rect x="258" y="382" width="15" height="268" fill="url(#gScroll)"/>
<rect x="265" y="388" width="1" height="1" fill="url(#gArr)"/>
<rect x="264" y="389" width="3" height="1" fill="url(#gArr)"/>
<rect x="263" y="390" width="5" height="1" fill="url(#gArr)"/>
<rect x="262" y="391" width="7" height="1" fill="url(#gArr)"/>
<rect x="262" y="640" width="7" height="1" fill="url(#gArr)" opacity="1.0"/>
<rect x="263" y="641" width="5" height="1" fill="url(#gArr)" opacity="0.8200000000000001"/>
<rect x="264" y="642" width="3" height="1" fill="url(#gArr)" opacity="0.64"/>
<rect x="265" y="643" width="1" height="1" fill="url(#gArr)" opacity="0.45999999999999996"/>
<rect x="80.5" y="384.5" width="20" height="20" rx="2.6" fill="#fff" stroke="#767676" shape-rendering="auto"/>
<rect x="82" y="386" width="17" height="8" rx="1.5" fill="url(#gBtnTop)" shape-rendering="auto"/>
<rect x="82" y="394" width="17" height="9" rx="1.5" fill="url(#gBtnBot)" shape-rendering="auto"/>
<rect x="105.5" y="384.5" width="20" height="20" rx="2.6" fill="#fff" stroke="#767676" shape-rendering="auto"/>
<rect x="107" y="386" width="17" height="8" rx="1.5" fill="url(#gBtnTop)" shape-rendering="auto"/>
<rect x="107" y="394" width="17" height="9" rx="1.5" fill="url(#gBtnBot)" shape-rendering="auto"/>
<rect x="130.5" y="384.5" width="20" height="20" rx="2.6" fill="#fff" stroke="#767676" shape-rendering="auto"/>
<rect x="132" y="386" width="17" height="8" rx="1.5" fill="url(#gBtnTop)" shape-rendering="auto"/>
<rect x="132" y="394" width="17" height="9" rx="1.5" fill="url(#gBtnBot)" shape-rendering="auto"/>
<rect x="232.5" y="384.5" width="20" height="20" rx="2.6" fill="#fff" stroke="#767676" shape-rendering="auto"/>
<rect x="234" y="386" width="17" height="8" rx="1.5" fill="url(#gBtnTop)" shape-rendering="auto"/>
<rect x="234" y="394" width="17" height="9" rx="1.5" fill="url(#gBtnBot)" shape-rendering="auto"/>
<rect x="85" y="395" width="12" height="1" fill="#d2d2d6"/>
<rect x="91" y="389" width="1" height="12" fill="#d2d2d6"/>
<rect x="84" y="393" width="12" height="2" fill="#0a10ff"/>
<rect x="89" y="388" width="2" height="12" fill="#0a10ff"/>
<g shape-rendering="auto" fill="none"><path d="M110.4 388.3 L120 399.3 M120 388.3 L110 399.3" stroke="#c4c4c4" stroke-width="2"/><path d="M109.6 387.5 L119.2 398.6 M119.2 387.5 L109.2 398.6" stroke="#e4335c" stroke-width="2.3"/></g>
<g shape-rendering="auto"><path d="M135.5 389.5 L142.6 389.5 M140.3 387.3 L142.7 389.5 L140.3 391.7" stroke="#666" stroke-width="0.9" fill="none"/><path d="M133.2 389.8 L134.8 388.2 L141 394.6 L143.2 392.6 L143.2 399 L136.8 399 L139 396.8 Z" fill="#078a0c"/></g>
<rect x="144" y="388" width="3" height="3" fill="#3a3a3a"/>
<rect x="144" y="399" width="3" height="3" fill="#3a3a3a"/>
<rect x="144" y="388" width="2" height="1" fill="#9a9a9a"/>
<rect x="144" y="399" width="2" height="1" fill="#9a9a9a"/>
<path d="M237 390 L241.2 394.3 L237 398.6 M243 390 L247.2 394.3 L243 398.6" stroke="#1c08e8" stroke-width="2.6" fill="none" shape-rendering="auto"/>
<text x="195" y="401" font-size="11" font-style="italic" stroke="#000" textLength="32.7" lengthAdjust="spacingAndGlyphs">Details</text>
<text x="113.7" y="420" font-size="11" text-anchor="start" fill="#000" stroke="#000" textLength="43.8" lengthAdjust="spacingAndGlyphs">Brücke_0</text>
<text x="113.7" y="436" font-size="11" text-anchor="start" fill="#000" stroke="#000" textLength="43.8" lengthAdjust="spacingAndGlyphs">Brücke_1</text>
<text x="113.7" y="452" font-size="11" text-anchor="start" fill="#000" stroke="#000" textLength="43.8" lengthAdjust="spacingAndGlyphs">Brücke_2</text>
<text x="113.7" y="468" font-size="11" text-anchor="start" fill="#000" stroke="#000" textLength="43.8" lengthAdjust="spacingAndGlyphs">Brücke_3</text>
<rect x="76" y="473" width="181" height="16" fill="#3399ff"/>
<text x="113.7" y="484" font-size="11" text-anchor="start" fill="#fff" stroke="#fff" textLength="61.6" lengthAdjust="spacingAndGlyphs">Temperatur1</text>
<text x="113.7" y="500" font-size="11" text-anchor="start" fill="#000" stroke="#000" textLength="61.6" lengthAdjust="spacingAndGlyphs">Temperatur2</text>
<text x="113.7" y="516" font-size="11" text-anchor="start" fill="#000" stroke="#000" textLength="61.6" lengthAdjust="spacingAndGlyphs">Temperatur3</text>
</g>
<g id="detail">
<text x="285.2" y="399" font-size="15" text-anchor="start" fill="#000" stroke="#000" textLength="138.8" lengthAdjust="spacingAndGlyphs">Einstellungen für RTD</text>
<rect x="285.5" y="434.5" width="300" height="217" fill="#fff" stroke="#868994" stroke-width="1"/>
<rect x="391" y="410" width="66" height="25" fill="#868b97"/>
<rect x="392" y="411" width="64" height="23" fill="#fff"/>
<rect x="393" y="412" width="62" height="8" fill="url(#gTabTop)"/>
<rect x="393" y="420" width="62" height="14" fill="url(#gTabBot)"/>
<rect x="457" y="410" width="96" height="25" fill="#868b97"/>
<rect x="458" y="411" width="94" height="23" fill="#fff"/>
<rect x="459" y="412" width="92" height="8" fill="url(#gTabTop)"/>
<rect x="459" y="420" width="92" height="14" fill="url(#gTabBot)"/>
<rect x="285" y="408" width="107" height="27" fill="#868994"/>
<rect x="286" y="409" width="105" height="27" fill="#fff"/>
<rect x="285" y="434" width="1" height="1" fill="#fff"/>
<rect x="295" y="415" width="12" height="11" fill="#000"/>
<rect x="296" y="416" width="10" height="9" fill="#fff"/>
<rect x="297" y="421" width="2" height="1" fill="#000"/>
<rect x="300" y="421" width="5" height="1" fill="#000"/>
<rect x="297" y="423" width="2" height="1" fill="#000"/>
<rect x="300" y="423" width="5" height="1" fill="#000"/>
<rect x="302" y="412" width="6" height="1" fill="#0a0a8a"/>
<rect x="307" y="416" width="2" height="2" fill="#0a0a8a"/>
<rect x="309" y="412" width="2" height="6" fill="#0a0a8a"/>
<polygon points="301.5,412 306,416.5 303.5,420.5 301,418 299,418.5 297,417.5" fill="url(#pChk)"/>
<rect x="303" y="413" width="6" height="2" fill="#c2c2c2"/>
<rect x="305" y="415" width="4" height="1" fill="#c2c2c2"/>
<rect x="306" y="416" width="1" height="1" fill="#c2c2c2"/>
<rect x="308" y="414" width="1" height="2" fill="#d8d8c8"/>
<rect x="297" y="417" width="2" height="2" fill="#000"/>
<text x="314.7" y="423" font-size="11" text-anchor="start" fill="#000" stroke="#000" textLength="62.4" lengthAdjust="spacingAndGlyphs">Einstellungen</text>
<rect x="400" y="416" width="13" height="9" fill="#028f02"/>
<rect x="400" y="425" width="4" height="2" fill="#8c8400"/>
<rect x="405" y="425" width="7" height="2" fill="#8c8400"/>
<rect x="402" y="419" width="4" height="4" fill="#000"/>
<rect x="407" y="418" width="3" height="2" fill="#000"/>
<rect x="408" y="421" width="2" height="3" fill="#000"/>
<rect x="413" y="416" width="2" height="1" fill="#000"/>
<rect x="413" y="416" width="1" height="11" fill="#000"/>
<rect x="412" y="420" width="3" height="5" fill="#000"/>
<rect x="414" y="417" width="1" height="3" fill="#fafafa"/>
<text x="419.9" y="425" font-size="11" text-anchor="start" fill="#000" stroke="#000" textLength="26.6" lengthAdjust="spacingAndGlyphs">Gerät</text>
<g shape-rendering="auto" fill="none" stroke="#000"><path d="M468.2 420.1 L474.7 414.3 M470.4 422.1 L476.7 417.5" stroke-width="2"/><rect x="472.5" y="421" width="5" height="5" fill="#fff" stroke="#b5b5b5" stroke-width="0.8"/><path d="M477.3 425.3 L482.9 429.9" stroke-width="2.1" stroke="#1a0a1a"/></g>
<rect x="467" y="421" width="1" height="1" fill="#000"/>
<rect x="469" y="423" width="1" height="1" fill="#000"/>
<rect x="474" y="423" width="1" height="1" fill="#000"/>
<rect x="475" y="422" width="1" height="1" fill="#000"/>
<text x="486.7" y="425" font-size="11" text-anchor="start" fill="#000" stroke="#000" textLength="55.5" lengthAdjust="spacingAndGlyphs">Kalibrierung</text>
<rect x="296.5" y="450.5" width="278" height="61" fill="none" stroke="#d3dde6" stroke-width="1" rx="3" shape-rendering="auto"/>
<rect x="305.6" y="449" width="110.79999999999995" height="3" fill="#fff"/>
<text x="307.6" y="454" font-size="11" text-anchor="start" fill="#3390ff" stroke="#3390ff" textLength="105.8" lengthAdjust="spacingAndGlyphs">Signaleingangsbereich</text>
<text x="314.7" y="475" font-size="11" text-anchor="start" fill="#000" stroke="#000" textLength="22.7" lengthAdjust="spacingAndGlyphs">Max.</text>
<text x="318.7" y="497" font-size="11" text-anchor="start" fill="#000" stroke="#000" textLength="18.7" lengthAdjust="spacingAndGlyphs">Min.</text>
<rect x="342.5" y="461.5" width="69" height="18" fill="#fff" stroke="#abadb3" stroke-width="1"/>
<text x="407.5" y="475" font-size="11" text-anchor="end" fill="#000" stroke="#000">300</text>
<rect x="342.5" y="483.5" width="69" height="18" fill="#fff" stroke="#abadb3" stroke-width="1"/>
<text x="407.5" y="497" font-size="11" text-anchor="end" fill="#000" stroke="#000">0</text>
<rect x="422.5" y="461.5" width="141" height="39" fill="none" stroke="#d3dde6" stroke-width="1" rx="3" shape-rendering="auto"/>
<rect x="431.6" y="460" width="81.39999999999998" height="3" fill="#fff"/>
<text x="433.6" y="465" font-size="11" text-anchor="start" fill="#3390ff" stroke="#3390ff" textLength="76.4" lengthAdjust="spacingAndGlyphs">Skalierte Einheit</text>
<rect x="433.5" y="472.5" width="119" height="18" fill="#fff" stroke="#abadb3" stroke-width="1"/>
<rect x="534" y="474" width="17" height="15" fill="#6d6d6d"/>
<rect x="535" y="475" width="15" height="13" fill="#ffffff"/>
<rect x="536" y="476" width="13" height="6" fill="url(#gBtnTop)"/>
<rect x="536" y="482" width="13" height="5" fill="url(#gBtnBot)"/>
<rect x="539" y="482" width="7" height="1" fill="#000"/>
<rect x="540" y="483" width="5" height="1" fill="#000"/>
<rect x="541" y="484" width="3" height="1" fill="#000"/>
<rect x="542" y="485" width="1" height="1" fill="#000"/>
<text x="467.3" y="485" font-size="11" text-anchor="start" fill="#000" stroke="#000" textLength="33.0" lengthAdjust="spacingAndGlyphs">Grad C</text>
<text x="296.5" y="540" font-size="11" text-anchor="start" fill="#000" stroke="#000" textLength="41.7" lengthAdjust="spacingAndGlyphs">RTD-Typ</text>
<text x="393.6" y="540" font-size="11" text-anchor="start" fill="#000" stroke="#000">Ro</text>
<text x="489.6" y="540" font-size="11" text-anchor="start" fill="#000" stroke="#000" textLength="63.8" lengthAdjust="spacingAndGlyphs">Konfiguration</text>
<rect x="296.5" y="543.5" width="85" height="18" fill="#fff" stroke="#abadb3" stroke-width="1"/>
<rect x="363" y="545" width="17" height="15" fill="#6d6d6d"/>
<rect x="364" y="546" width="15" height="13" fill="#ffffff"/>
<rect x="365" y="547" width="13" height="6" fill="url(#gBtnTop)"/>
<rect x="365" y="553" width="13" height="5" fill="url(#gBtnBot)"/>
<rect x="368" y="553" width="7" height="1" fill="#000"/>
<rect x="369" y="554" width="5" height="1" fill="#000"/>
<rect x="370" y="555" width="3" height="1" fill="#000"/>
<rect x="371" y="556" width="1" height="1" fill="#000"/>
<text x="299.3" y="556" font-size="11" text-anchor="start" fill="#000" stroke="#000" textLength="61.0" lengthAdjust="spacingAndGlyphs">Benutzerdefi</text>
<rect x="393.5" y="543.5" width="84" height="18" fill="#fff" stroke="#abadb3" stroke-width="1"/>
<text x="473" y="557" font-size="11" text-anchor="end" fill="#000" stroke="#000">100</text>
<rect x="489.5" y="543.5" width="85" height="18" fill="#fff" stroke="#abadb3" stroke-width="1"/>
<rect x="556" y="545" width="17" height="15" fill="#6d6d6d"/>
<rect x="557" y="546" width="15" height="13" fill="#ffffff"/>
<rect x="558" y="547" width="13" height="6" fill="url(#gBtnTop)"/>
<rect x="558" y="553" width="13" height="5" fill="url(#gBtnBot)"/>
<rect x="561" y="553" width="7" height="1" fill="#000"/>
<rect x="562" y="554" width="5" height="1" fill="#000"/>
<rect x="563" y="555" width="3" height="1" fill="#000"/>
<rect x="564" y="556" width="1" height="1" fill="#000"/>
<text x="505" y="556" font-size="11" text-anchor="start" fill="#000" stroke="#000" textLength="36.7" lengthAdjust="spacingAndGlyphs">3-Draht</text>
<text x="296.5" y="579" font-size="11" text-anchor="start" fill="#000" stroke="#000" textLength="49.0" lengthAdjust="spacingAndGlyphs">Iex-Quelle</text>
<text x="393.6" y="579" font-size="11" text-anchor="start" fill="#000" stroke="#000" textLength="34.0" lengthAdjust="spacingAndGlyphs">Iex (A)</text>
<rect x="296.5" y="582.5" width="85" height="18" fill="#fff" stroke="#abadb3" stroke-width="1"/>
<rect x="363" y="584" width="17" height="15" fill="#6d6d6d"/>
<rect x="364" y="585" width="15" height="13" fill="#ffffff"/>
<rect x="365" y="586" width="13" height="6" fill="url(#gBtnTop)"/>
<rect x="365" y="592" width="13" height="5" fill="url(#gBtnBot)"/>
<rect x="368" y="592" width="7" height="1" fill="#000"/>
<rect x="369" y="593" width="5" height="1" fill="#000"/>
<rect x="370" y="594" width="3" height="1" fill="#000"/>
<rect x="371" y="595" width="1" height="1" fill="#000"/>
<text x="314.4" y="595" font-size="11" text-anchor="start" fill="#000" stroke="#000" textLength="29.8" lengthAdjust="spacingAndGlyphs">Intern</text>
<rect x="393.5" y="582.5" width="84" height="18" fill="#fff" stroke="#abadb3" stroke-width="1"/>
<text x="473" y="596" font-size="11" text-anchor="end" fill="#000" stroke="#000">1m</text>
<text x="296.5" y="618" font-size="11" text-anchor="start" fill="#000" stroke="#000">A</text>
<text x="393.6" y="618" font-size="11" text-anchor="start" fill="#000" stroke="#000">B</text>
<text x="489.6" y="618" font-size="11" text-anchor="start" fill="#000" stroke="#000">C</text>
<rect x="296.5" y="621.5" width="85" height="18" fill="#fff" stroke="#abadb3" stroke-width="1"/>
<text x="377" y="635" font-size="11" text-anchor="end" fill="#000" stroke="#000">3,9083m</text>
<rect x="393.5" y="621.5" width="84" height="18" fill="#fff" stroke="#abadb3" stroke-width="1"/>
<text x="473" y="635" font-size="11" text-anchor="end" fill="#000" stroke="#000">-577,5n</text>
<rect x="489.5" y="621.5" width="85" height="18" fill="#fff" stroke="#abadb3" stroke-width="1"/>
<text x="570" y="635" font-size="11" text-anchor="end" fill="#000" stroke="#000">-4,183p</text>
</g>
<g id="timing">
<rect x="62.5" y="678.5" width="535" height="51" fill="none" stroke="#d3dde6" stroke-width="1" rx="3" shape-rendering="auto"/>
<rect x="73" y="677" width="101.19999999999999" height="3" fill="#fff"/>
<text x="75" y="682" font-size="11" text-anchor="start" fill="#3390ff" stroke="#3390ff" textLength="96.2" lengthAdjust="spacingAndGlyphs">Timing-Einstellungen</text>
<text x="74.3" y="697" font-size="11" text-anchor="start" fill="#000" stroke="#000" textLength="83.7" lengthAdjust="spacingAndGlyphs">Erfassungsmodus</text>
<rect x="74.5" y="700.5" width="234" height="18" fill="#fff" stroke="#abadb3" stroke-width="1"/>
<rect x="290" y="702" width="17" height="15" fill="#6d6d6d"/>
<rect x="291" y="703" width="15" height="13" fill="#ffffff"/>
<rect x="292" y="704" width="13" height="6" fill="url(#gBtnTop)"/>
<rect x="292" y="710" width="13" height="5" fill="url(#gBtnBot)"/>
<rect x="295" y="710" width="7" height="1" fill="#000"/>
<rect x="296" y="711" width="5" height="1" fill="#000"/>
<rect x="297" y="712" width="3" height="1" fill="#000"/>
<rect x="298" y="713" width="1" height="1" fill="#000"/>
<text x="150.3" y="713" font-size="11" text-anchor="start" fill="#000" stroke="#000" textLength="62.9" lengthAdjust="spacingAndGlyphs">Kontinuierlich</text>
<text x="321.5" y="697" font-size="11" text-anchor="start" fill="#000" stroke="#000" textLength="94.0" lengthAdjust="spacingAndGlyphs">Zu lesende Samples</text>
<rect x="320.5" y="700.5" width="127" height="18" fill="#fff" stroke="#abadb3" stroke-width="1"/>
<text x="442.6" y="714" font-size="11" text-anchor="end" fill="#000" stroke="#000">10</text>
<text x="460.5" y="697" font-size="11" text-anchor="start" fill="#000" stroke="#000" textLength="45.8" lengthAdjust="spacingAndGlyphs">Rate (Hz)</text>
<rect x="459.5" y="700.5" width="127" height="18" fill="#fff" stroke="#abadb3" stroke-width="1"/>
<text x="581.2" y="714" font-size="11" text-anchor="end" fill="#000" stroke="#000">10</text>
</g>
</g></g>
</svg></body></html>
